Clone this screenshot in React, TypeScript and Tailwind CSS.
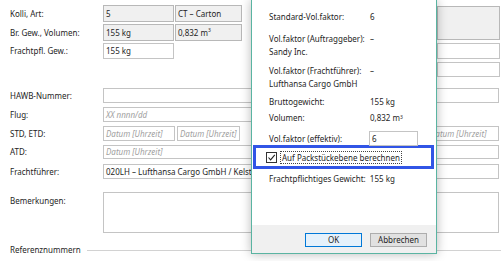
import React from "react";

type BoxProps = {
  className?: string;
  disabled?: boolean;
  placeholder?: string;
  children?: React.ReactNode;
};

const Box: React.FC<BoxProps> = ({ className = "", disabled, placeholder, children }) => (
  <div
    className={`flex shrink-0 items-center overflow-hidden whitespace-nowrap border px-[2px] ${
      disabled ? "border-[#b8b8b8] bg-[#f0f0f0]" : "border-[#c4c4c4] bg-white"
    } ${className}`}
  >
    {placeholder ? <span className="italic text-[#a0a0a0]">{placeholder}</span> : children}
  </div>
);

const Label: React.FC<{ children: React.ReactNode; className?: string }> = ({ children, className = "" }) => (
  <div className={`w-[93px] shrink-0 whitespace-nowrap ${className}`}>{children}</div>
);

const Info: React.FC<{ label: string; value?: string; className?: string }> = ({ label, value, className = "" }) => (
  <div className={`flex whitespace-nowrap ${className}`}>
    <div className="w-[101px] shrink-0">{label}</div>
    {value && <div>{value}</div>}
  </div>
);

const App: React.FC = () => {
  return (
    <div className="relative h-[261px] w-[504px] overflow-hidden bg-white font-['Noto_Sans',sans-serif] text-[8px] text-[#1e1e1e]">
      {/* background form */}
      <div className="flex flex-col pl-[10px] pt-[5px]">
        <div className="flex">
          <div className="flex w-[232px] flex-col">
            <div className="flex h-[17px] items-center">
              <Label>Kolli, Art:</Label>
              <Box disabled className="h-full w-[71px]">5</Box>
              <Box disabled className="ml-[1px] h-full w-[67px]">CT – Carton</Box>
            </div>
            <div className="mt-[2px] flex h-[17px] items-center">
              <Label>Br. Gew., Volumen:</Label>
              <Box disabled className="h-full w-[71px]">155 kg</Box>
              <Box disabled className="ml-[1px] h-full w-[67px]">
                0,832 m<sup className="text-[5px]">3</sup>
              </Box>
            </div>
            <div className="mt-[2px] flex h-[16px] items-center">
              <Label>Frachtpfl. Gew.:</Label>
              <Box className="h-full w-[71px]">155 kg</Box>
            </div>
          </div>
          <div className="ml-[195px] flex flex-col pt-[1px]">
            <Box disabled className="h-[34px] w-[63px]" />
            <Box className="mt-[3px] h-[16px] w-[63px]" />
            <Box className="mt-[3px] h-[15px] w-[63px]" />
          </div>
        </div>

        <div className="mt-[11px] flex h-[15px] items-center">
          <Label>HAWB-Nummer:</Label>
          <Box className="h-full w-[396px]" />
        </div>
        <div className="mt-[4px] flex h-[15px] items-center">
          <Label>Flug:</Label>
          <Box className="h-full w-[200px]" placeholder="XX nnnn/dd" />
        </div>
        <div className="mt-[4px] flex h-[15px] items-center">
          <Label>STD, ETD:</Label>
          <Box className="h-full w-[72px]" placeholder="Datum [Uhrzeit]" />
          <Box className="ml-[2px] h-full w-[63px]" placeholder="Datum [Uhrzeit]" />
          <Box className="ml-[187px] h-full w-[72px]" placeholder="Datum [Uhrzeit]" />
        </div>
        <div className="mt-[4px] flex h-[14px] items-center">
          <Label>ATD:</Label>
          <Box className="h-full w-[396px]" placeholder="Datum [Uhrzeit]" />
        </div>
        <div className="mt-[5px] flex h-[15px] items-center">
          <Label>Frachtführer:</Label>
          <Box className="h-full w-[396px]">020LH – Lufthansa Cargo GmbH / Kelsterbach</Box>
        </div>
        <div className="mt-[13px] flex h-[41px] items-start">
          <Label className="pt-[3px]">Bemerkungen:</Label>
          <Box className="h-full w-[396px] border-[#ababab]" />
        </div>
        <div className="mt-[11px] flex h-[12px] items-center">
          <div className="whitespace-nowrap">Referenznummern</div>
          <div className="ml-[6px] w-[414px] border-t border-[#d2d2d2]" />
        </div>
      </div>

      {/* dialog */}
      <div className="absolute left-[251px] top-0 flex h-[254px] w-[186px] flex-col border-x border-b border-[#5ab4a2] bg-white shadow-[0_0_10px_rgba(0,0,0,0.28)]">
        <div className="flex-1 pl-[17px] pt-[10px] leading-[13px]">
          <Info label="Standard-Vol.faktor:" value="6" />
          <Info className="mt-[9px]" label="Vol.faktor (Auftraggeber):" value="–" />
          <div>Sandy Inc.</div>
          <Info className="mt-[6px]" label="Vol.faktor (Frachtführer):" value="–" />
          <div>Lufthansa Cargo GmbH</div>
          <Info className="mt-[5px]" label="Bruttogewicht:" value="155 kg" />
          <div className="mt-[3px] flex whitespace-nowrap">
            <div className="w-[101px] shrink-0">Volumen:</div>
            <div>
              0,832 m<sup className="text-[5px]">3</sup>
            </div>
          </div>
          <div className="mt-[7px] flex h-[14px] items-center whitespace-nowrap">
            <div className="w-[100px] shrink-0">Vol.faktor (effektiv):</div>
            <Box className="h-[15px] w-[49px] border-[#a8a8a8]">6</Box>
          </div>
          <div className="ml-[-16px] flex h-[24px] w-[181px] items-center border-[3px] border-[#3155e6] pl-[10px]">
            <div className="h-[11px] w-[11px] border border-[#333] bg-white">
              <svg viewBox="0 0 9 9" className="h-[9px] w-[9px]">
                <polyline points="1.5,4.5 3.6,6.8 7.8,1.8" fill="none" stroke="#222" strokeWidth="1.1" />
              </svg>
            </div>
            <div className="ml-[3px] whitespace-nowrap border border-dotted border-[#444] px-[1px] leading-[11px]">
              Auf Packstückebene berechnen
            </div>
          </div>
          <div className="mt-[3px] whitespace-nowrap">Frachtpflichtiges Gewicht:&nbsp; 155 kg</div>
        </div>
        <div className="flex h-[28px] justify-end gap-[8px] bg-[#f0f0f0] pr-[9px] pt-[8px]">
          <button className="flex h-[14px] w-[57px] items-center justify-center border border-[#0078d7] bg-[#e5f1fb]">
            OK
          </button>
          <button className="flex h-[14px] w-[57px] items-center justify-center border border-[#adadad] bg-[#e1e1e1]">
            Abbrechen
          </button>
        </div>
      </div>
    </div>
  );
};

export default App;
